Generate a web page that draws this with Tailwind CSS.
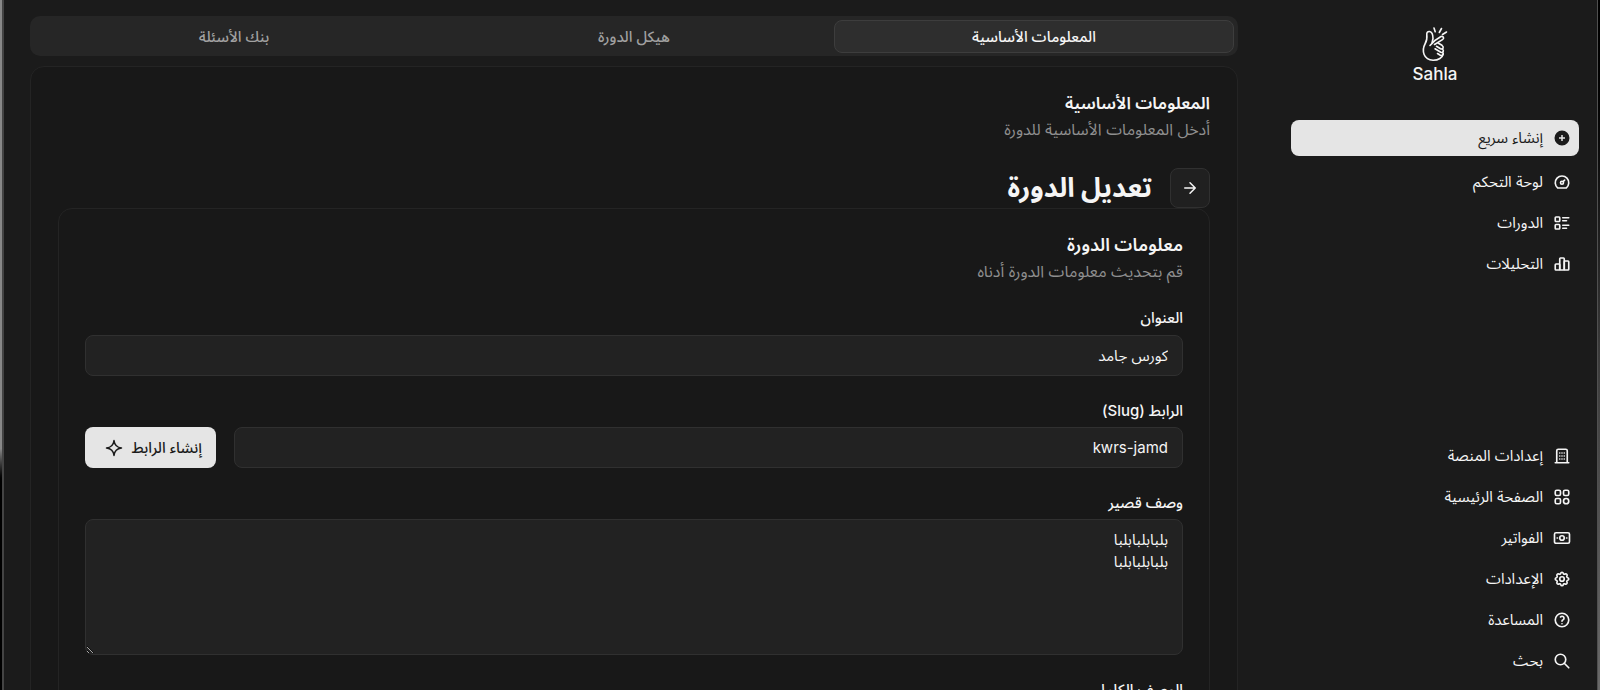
<!DOCTYPE html>
<html lang="ar" dir="rtl">
<head>
  <meta charset="UTF-8" />
  <meta name="viewport" content="width=device-width, initial-scale=1.0"/>
  <title>Sahla - تعديل الدورة</title>
  <script src="https://cdn.jsdelivr.net/npm/@tailwindcss/browser@4"></script>
</head>
<body class="h-screen overflow-hidden bg-[#1b1b1b] text-[#f5f5f5] text-[15px] leading-[22px] scheme-dark font-[Inter,'Noto_Sans_Arabic','Noto_Sans','DejaVu_Sans',sans-serif]">
  <div class="flex h-full">
    <!-- window edge -->
    <div class="w-[3px] shrink-0 border-l border-[#505050] bg-linear-to-b from-black via-[#3a3a3a] to-[#6a6a6a]"></div>

    <aside class="flex w-[323px] shrink-0 flex-col ps-[18px] pe-[17px] pt-[26px] pb-[11px]">
      <a href="#" class="flex flex-col items-center">
        <svg class="h-9 w-7" viewBox="0 0 28 36" fill="none" stroke="currentColor" stroke-width="1.6" stroke-linecap="round" stroke-linejoin="round">
          <path d="M11 17L12 12.500C12 9 11 6 8.500 5.500C6.500 5.300 5.600 6.700 5.800 8.500C6.300 12.500 5.800 15 4 18C0.500 24.500 2.500 34 12 34.200C17.500 34.300 21.500 31.500 22.200 28"/>
          <path d="M9 19.500C12 16 16 12.500 20 10.500C22.500 9.700 23.500 12.500 21.500 13.600L13.500 18.500"/>
          <path d="M17 17L21 19.300C23.500 21.300 21.800 23.700 19.500 22.800L15.500 20.300"/>
          <path d="M21.300 22.800C23.500 24.800 22 27.200 19.800 26.300L14 22.800"/>
          <path d="M21.500 26.300C23.200 28.300 21.300 30 19.300 29.200L16.500 27.500"/>
          <path d="M13 2L14.200 5.800M20.500 2.500L18.300 6.500M25.500 6L21.500 8.500"/>
        </svg>
        <span class="text-[17px] leading-6 font-medium">Sahla</span>
      </a>

      <button class="mt-[34px] flex h-9 items-center gap-[10px] rounded-lg bg-[#e5e5e5] px-2 text-[#1b1b1b]">
        <svg class="size-[18px]" viewBox="0 0 24 24" fill="currentColor"><path fill-rule="evenodd" d="M12 2a10 10 0 1 0 0 20a10 10 0 0 0 0-20zM13 8v3h3v2h-3v3h-2v-3H8v-2h3V8z"/></svg>
        إنشاء سريع
      </button>

      <nav class="mt-2 flex flex-col gap-[5px]">
        <a href="#" class="flex h-9 items-center gap-[10px] px-2">
          <svg class="size-[18px]" viewBox="0 0 24 24" fill="none" stroke="currentColor" stroke-width="2.2" stroke-linecap="round" stroke-linejoin="round"><path d="M10 13a2 2 0 1 0 4 0a2 2 0 1 0-4 0M13.450 11.550l2.050-2.050M6.400 20a9 9 0 1 1 11.200 0z"/></svg>
          لوحة التحكم
        </a>
        <a href="#" class="flex h-9 items-center gap-[10px] px-2">
          <svg class="size-[18px]" viewBox="0 0 24 24" fill="none" stroke="currentColor" stroke-width="2.2" stroke-linecap="round" stroke-linejoin="round"><path d="M13 5h8M13 9h5M13 15h8M13 19h5"/><rect x="3" y="4" width="6" height="6" rx="1"/><rect x="3" y="14" width="6" height="6" rx="1"/></svg>
          الدورات
        </a>
        <a href="#" class="flex h-9 items-center gap-[10px] px-2">
          <svg class="size-[18px]" viewBox="0 0 24 24" fill="none" stroke="currentColor" stroke-width="2.2" stroke-linecap="round" stroke-linejoin="round"><rect x="3" y="12" width="6" height="8" rx="1"/><rect x="9" y="4" width="6" height="16" rx="1"/><rect x="15" y="8" width="6" height="12" rx="1"/></svg>
          التحليلات
        </a>
      </nav>

      <nav class="mt-auto flex flex-col gap-[5px]">
        <a href="#" class="flex h-9 items-center gap-[10px] px-2">
          <svg class="size-[18px]" viewBox="0 0 24 24" fill="none" stroke="currentColor" stroke-width="2.2" stroke-linecap="round" stroke-linejoin="round"><path d="M3 21h18M5 21V5a2 2 0 0 1 2-2h10a2 2 0 0 1 2 2v16M9 8h.01M12 8h.01M15 8h.01M9 12h.01M12 12h.01M15 12h.01M9 16h.01M12 16h.01M15 16h.01"/></svg>
          إعدادات المنصة
        </a>
        <a href="#" class="flex h-9 items-center gap-[10px] px-2">
          <svg class="size-[18px]" viewBox="0 0 24 24" fill="none" stroke="currentColor" stroke-width="2.2"><rect x="3" y="3" width="7" height="7" rx="2"/><rect x="14" y="3" width="7" height="7" rx="2"/><rect x="3" y="14" width="7" height="7" rx="2"/><circle cx="17.500" cy="17.500" r="3.500"/></svg>
          الصفحة الرئيسية
        </a>
        <a href="#" class="flex h-9 items-center gap-[10px] px-2">
          <svg class="size-[18px]" viewBox="0 0 24 24" fill="none" stroke="currentColor" stroke-width="2.2" stroke-linecap="round"><rect x="2" y="5" width="20" height="14" rx="2"/><circle cx="12" cy="12" r="3"/><path d="M5.500 12h.5M18 12h.5"/></svg>
          الفواتير
        </a>
        <a href="#" class="flex h-9 items-center gap-[10px] px-2">
          <svg class="size-[18px]" viewBox="0 0 24 24" fill="none" stroke="currentColor" stroke-width="2.2" stroke-linecap="round" stroke-linejoin="round"><path d="M10.325 4.317c.426-1.756 2.924-1.756 3.350 0a1.724 1.724 0 0 0 2.573 1.066c1.543-.94 3.310.826 2.370 2.370a1.724 1.724 0 0 0 1.065 2.572c1.756.426 1.756 2.924 0 3.350a1.724 1.724 0 0 0-1.066 2.573c.94 1.543-.826 3.310-2.370 2.370a1.724 1.724 0 0 0-2.572 1.065c-.426 1.756-2.924 1.756-3.350 0a1.724 1.724 0 0 0-2.573-1.066c-1.543.94-3.310-.826-2.370-2.370a1.724 1.724 0 0 0-1.065-2.572c-1.756-.426-1.756-2.924 0-3.350a1.724 1.724 0 0 0 1.066-2.573c-.94-1.543.826-3.310 2.370-2.370a1.724 1.724 0 0 0 2.572-1.065z"/><circle cx="12" cy="12" r="3"/></svg>
          الإعدادات
        </a>
        <a href="#" class="flex h-9 items-center gap-[10px] px-2">
          <svg class="size-[18px]" viewBox="0 0 24 24" fill="none" stroke="currentColor" stroke-width="2.2" stroke-linecap="round" stroke-linejoin="round"><circle cx="12" cy="12" r="9"/><path d="M12 17v.01M12 13.500a1.500 1.500 0 0 1 1-1.500a2.600 2.600 0 1 0-3-4"/></svg>
          المساعدة
        </a>
        <a href="#" class="flex h-9 items-center gap-[10px] px-2">
          <svg class="size-[18px]" viewBox="0 0 24 24" fill="none" stroke="currentColor" stroke-width="2.2" stroke-linecap="round" stroke-linejoin="round"><circle cx="10" cy="10" r="7"/><path d="M21 21l-6-6"/></svg>
          بحث
        </a>
      </nav>
    </aside>

    <main class="min-w-0 flex-1 ps-[36px] pt-4 pe-[26px]">
      <div role="tablist" class="grid h-10 grid-cols-3 rounded-[10px] bg-[#262626] p-1 pb-[3px] text-[#a1a1a1]">
        <button role="tab" aria-selected="true" class="rounded-lg border border-[#3d3d3d] bg-[#2e2e2e] font-medium text-[#f5f5f5]">المعلومات الأساسية</button>
        <button role="tab" aria-selected="false" class="font-medium">هيكل الدورة</button>
        <button role="tab" aria-selected="false" class="font-medium">بنك الأسئلة</button>
      </div>

      <section class="mt-[10px] rounded-[14px] border border-[#242424] bg-[#181818] px-[27px] pt-[25px]">
        <h2 class="text-[17px] leading-[22px] font-semibold">المعلومات الأساسية</h2>
        <p class="mt-1 text-base leading-[22px] text-[#8f8f8f]">أدخل المعلومات الأساسية للدورة</p>

        <div class="mt-7 flex items-center gap-[18px]">
          <button aria-label="رجوع" class="flex size-10 items-center justify-center rounded-lg border border-[#303030] bg-[#202020]">
            <svg class="size-[18px]" viewBox="0 0 24 24" fill="none" stroke="currentColor" stroke-width="2" stroke-linecap="round" stroke-linejoin="round"><path d="M5 12h14M12 5l7 7l-7 7"/></svg>
          </button>
          <h1 class="text-[27px] leading-9 font-bold">تعديل الدورة</h1>
        </div>

        <form class="rounded-[14px] border border-[#242424] bg-[#181818] px-[26px] pt-[25px]">
          <h3 class="text-lg leading-[22px] font-semibold">معلومات الدورة</h3>
          <p class="mt-1 text-base leading-[22px] text-[#8f8f8f]">قم بتحديث معلومات الدورة أدناه</p>

          <label for="title" class="mt-[25px] block font-medium">العنوان</label>
          <input id="title" type="text" value="كورس جامد" class="mt-[6px] block h-[41px] w-full rounded-lg border border-[#303030] bg-[#222] px-[14px]" />

          <label for="slug" class="mt-6 block font-medium">الرابط (Slug)</label>
          <div class="mt-[5px] flex gap-[18px]">
            <input id="slug" type="text" value="kwrs-jamd" class="block h-[41px] min-w-0 flex-1 rounded-lg border border-[#303030] bg-[#222] px-[14px]" />
            <button type="button" class="flex h-[41px] w-[131px] items-center gap-[9px] rounded-lg bg-[#e5e5e5] px-[14px] font-medium text-[#1b1b1b]">
              إنشاء الرابط
              <svg class="size-[18px]" viewBox="0 0 24 24" fill="none" stroke="currentColor" stroke-width="2" stroke-linejoin="round"><path d="M12 2Q13 11 22 12Q13 13 12 22Q11 13 2 12Q11 11 12 2z"/></svg>
            </button>
          </div>

          <label for="short" class="mt-6 block font-medium">وصف قصير</label>
          <textarea id="short" class="mt-[5px] block h-[136px] w-full rounded-lg border border-[#303030] bg-[#222] px-[14px] py-[9px]">بلبابلبابلبا
بلبابلبابلبا</textarea>

          <label for="full" class="mt-6 block font-medium">الوصف الكامل</label>
          <textarea id="full" class="mt-[5px] block h-[136px] w-full rounded-lg border border-[#303030] bg-[#222] px-[14px] py-[9px]"></textarea>
        </form>
      </section>
    </main>

    <!-- window edge -->
    <div class="w-[4px] shrink-0 border-r-2 border-[#444] bg-linear-to-b from-[#888] from-65% to-black to-70%"></div>
  </div>
</body>
</html>
